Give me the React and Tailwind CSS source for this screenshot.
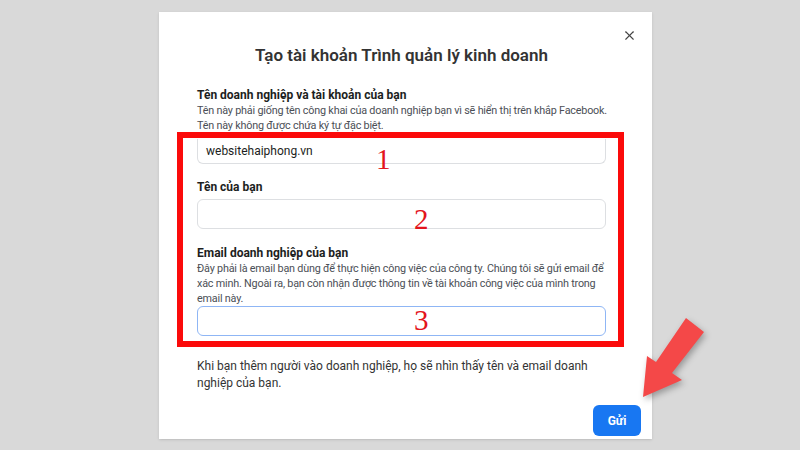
import { X } from 'lucide-react'

function Field({ label, hint, children }) {
  return (
    <div>
      <div className="text-[12px] leading-[16px] font-bold text-[#1c1e21]">{label}</div>
      {hint && <p className="text-[10.8px] leading-[15px] tracking-[-0.2px] text-[#4b4f56] whitespace-nowrap">{hint}</p>}
      {children}
    </div>
  )
}

export default function App() {
  return (
    <div
      className="relative w-[800px] h-[450px] overflow-hidden bg-[#d9d9d9] pt-[12px] pl-[159px]"
      style={{ fontFamily: 'Roboto, "Noto Sans", sans-serif' }}
    >
      <div className="relative w-[493px] h-[427px] bg-white shadow-sm pt-[31px] pl-[38px] pr-[46px]">
        <button className="absolute top-[16px] right-[15px] text-[#444]">
          <X size={15} strokeWidth={1.8} />
        </button>

        <h1 className="text-center text-[17px] leading-[24px] font-semibold text-[#333]">
          Tạo tài khoản Trình quản lý kinh doanh
        </h1>

        <div className="mt-[20px]">
          <Field
            label="Tên doanh nghiệp và tài khoản của bạn"
            hint={
              <>
                Tên này phải giống tên công khai của doanh nghiệp bạn vì sẽ hiển thị trên khắp Facebook.
                <br />
                Tên này không được chứa ký tự đặc biệt.
              </>
            }
          />
        </div>

        <div className="mt-[-1px] ml-[-20px] mr-[-18px] border-[6px] border-[#fb0a0a] pl-[14px] pr-[12px] pt-[1px] pb-[5px]">
          <div className="h-[25px] rounded-b-[6px] border border-t-0 border-[#dddfe2] flex items-center px-[8px] text-[12px] text-[#1c1e21]">
            websitehaiphong.vn
          </div>

          <div className="mt-[15px]">
            <Field label="Tên của bạn">
              <div className="mt-[4px] h-[30px] rounded-[6px] border border-[#dddfe2]" />
            </Field>
          </div>

          <div className="mt-[16px]">
            <Field
              label="Email doanh nghiệp của bạn"
              hint={
                <>
                  Đây phải là email bạn dùng để thực hiện công việc của công ty. Chúng tôi sẽ gửi email để
                  <br />
                  xác minh. Ngoài ra, bạn còn nhận được thông tin về tài khoản công việc của mình trong
                  <br />
                  email này.
                </>
              }
            >
              <div className="h-[30px] rounded-[6px] border-[1.5px] border-[#8fb6f5]" />
            </Field>
          </div>
        </div>

        <p className="mt-[11px] text-[12px] leading-[17px] text-[#333] whitespace-nowrap">
          Khi bạn thêm người vào doanh nghiệp, họ sẽ nhìn thấy tên và email doanh
          <br />
          nghiệp của bạn.
        </p>

        <div className="mt-[13px] mr-[-35px] flex justify-end">
          <button className="w-[48px] h-[31px] rounded-[6px] bg-[#1877f2] text-white text-[12px] font-bold">
            Gửi
          </button>
        </div>
      </div>

      <span className="absolute left-[376px] top-[141px] text-[29px] leading-[36px] text-[#e3141c]" style={{ fontFamily: '"Liberation Serif", serif' }}>1</span>
      <span className="absolute left-[414px] top-[201px] text-[29px] leading-[36px] text-[#e3141c]" style={{ fontFamily: '"Liberation Serif", serif' }}>2</span>
      <span className="absolute left-[414px] top-[302px] text-[29px] leading-[36px] text-[#e3141c]" style={{ fontFamily: '"Liberation Serif", serif' }}>3</span>

      <svg className="absolute left-0 top-0 drop-shadow-[2px_3px_3px_rgba(0,0,0,0.3)]" width="800" height="450" viewBox="0 0 800 450">
        <polygon
          points="686,318 704,332 672,373 682,380 643,397 647,356 656,362"
          fill="#f44848"
        />
      </svg>
    </div>
  )
}
